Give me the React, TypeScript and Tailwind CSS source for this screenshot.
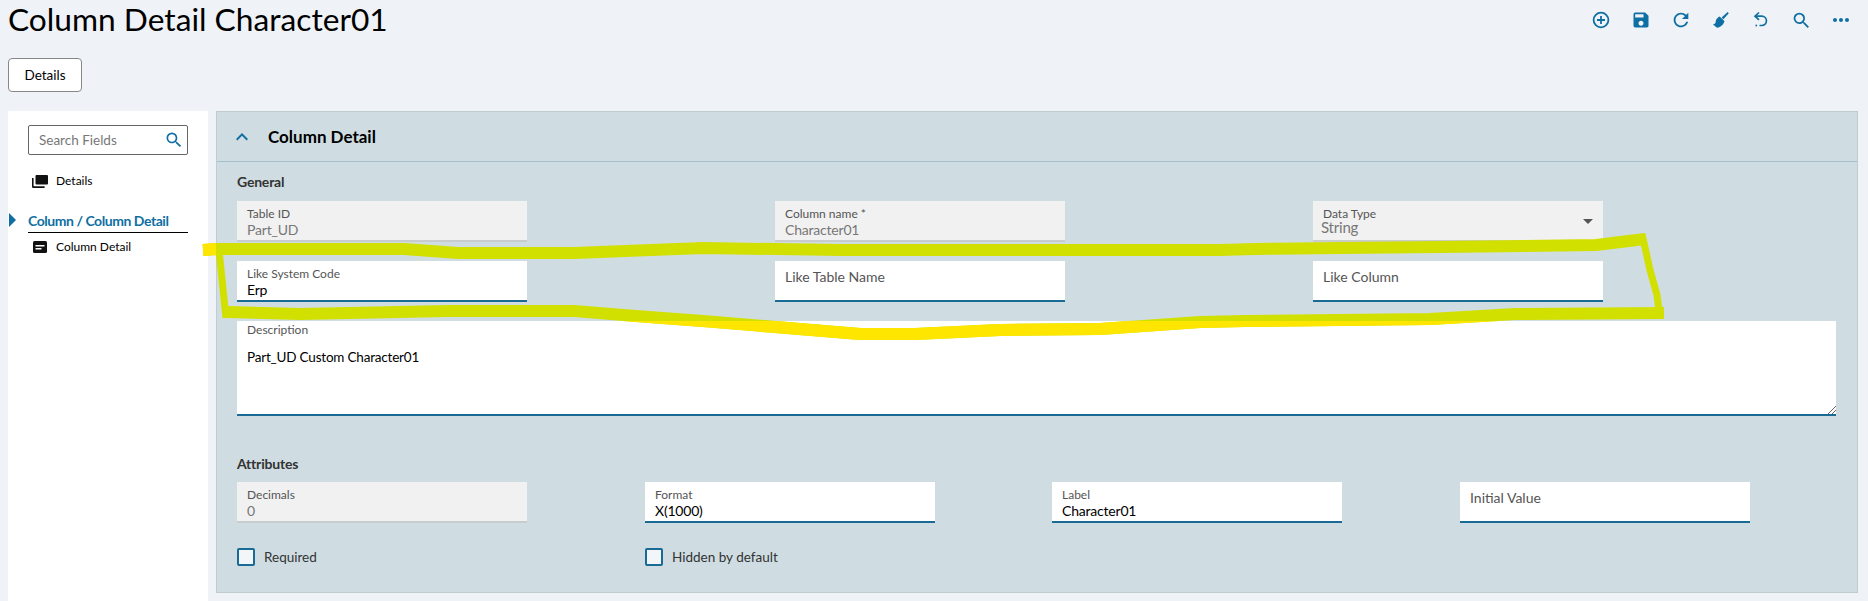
import { ReactNode } from "react";
import { MdSave, MdRefresh, MdSearch, MdMoreHoriz, MdKeyboardArrowUp, MdArrowDropDown } from "react-icons/md";

const font = { fontFamily: '"Lato", "Noto Sans", sans-serif' };

function AddIcon() {
  return (
    <svg width="18" height="18" viewBox="0 0 18 18" fill="none" stroke="#0f6fa3" strokeWidth="1.8">
      <circle cx="9" cy="9" r="7.4" />
      <path d="M9 5v8M5 9h8" />
    </svg>
  );
}

function BroomIcon() {
  return (
    <svg width="18" height="18" viewBox="0 0 18 18" fill="#0f6fa3">
      <path d="M7.6 5.6 12.4 10C12 13.2 8.8 16.2 5 16.8L1 13.6C3 13 4 11.4 3.8 9.4 4.8 7.6 6.2 6.2 7.6 5.6z" />
      <path d="M9.6 6.6 15.6 1l1.2 1.2-5.4 6z" />
    </svg>
  );
}

function UndoIcon() {
  return (
    <svg width="18" height="18" viewBox="0 0 18 18" fill="none" stroke="#0f6fa3" strokeWidth="1.7">
      <path d="M7 1.5 3 5.2l4 3.6" />
      <path d="M3.4 5.2h6.4a4.6 4.6 0 0 1 0 9.3H7.5" />
      <path d="M3.5 14.5h1.6" />
    </svg>
  );
}

function DetailsIcon() {
  return (
    <svg width="16" height="13" viewBox="0 0 16 13" fill="#111">
      <rect x="3.5" y="0" width="12.5" height="9.5" rx="1" />
      <path d="M0 3h1.6v8.2h11V13H1.2A1.2 1.2 0 0 1 0 11.8z" />
    </svg>
  );
}

function ColumnDetailIcon() {
  return (
    <svg width="14" height="12" viewBox="0 0 14 12">
      <rect width="14" height="12" rx="1.5" fill="#111" />
      <path d="M2.5 4h9v1.5h-9zM2.5 7h6v1.5h-6z" fill="#fff" />
    </svg>
  );
}

function ToolButton({ children }: { children: ReactNode }) {
  return <span className="flex h-[18px] w-[18px] items-center justify-center">{children}</span>;
}

function Field({
  label,
  value,
  disabled,
  select,
}: {
  label: string;
  value?: string;
  disabled?: boolean;
  select?: boolean;
}) {
  return (
    <div
      className={`relative h-[41px] w-[290px] border-b-2 pl-[10px] ${
        disabled ? "bg-[#f1f1f1] border-[#c9cccd]" : "bg-white border-[#1a6a96]"
      }`}
    >
      {value ? (
        <>
          <div className="pt-[5px] text-[12px] leading-[15px] text-[#555]">{label}</div>
          {select ? (
            <div className="ml-[-2px] mt-[-2px] text-[15px] leading-[17px] tracking-[-0.2px] text-[#777]">{value}</div>
          ) : (
            <div className={`text-[14px] leading-[17px] tracking-[-0.2px] ${disabled ? "text-[#777]" : "text-black"}`}>
              {value}
            </div>
          )}
        </>
      ) : (
        <div className="pt-[6px] text-[14px] leading-[20px] text-[#555]">{label}</div>
      )}
      {select && (
        <MdArrowDropDown className="absolute right-[3px] top-[8px] text-[#555]" size={24} />
      )}
    </div>
  );
}

function Checkbox({ label }: { label: string }) {
  return (
    <label className="flex items-center gap-[9px]">
      <span className="h-[18px] w-[18px] rounded-[2px] border-2 border-[#1a6a96] bg-[#f3f6f8]" />
      <span className="text-[13.5px] text-[#333]">{label}</span>
    </label>
  );
}

// hand drawn highlighter strokes, same shapes painted green and then yellow where it runs over white
function Strokes({ color }: { color: string }) {
  return (
    <g stroke={color}>
      <path
        strokeWidth="12"
        d="M203 250 L217 249 L404 249 L458 253 L574 253 L703 248 L840 250 L1220 250 L1255 249 L1439 247 L1596 245 L1645 239"
      />
      <path
        strokeWidth="12"
        d="M1664 313 L1515 314 L1430 319 L1245 321 L1200 322 L1100 329 L1000 330 L915 334 L860 334 L703 321 L636 316 L574 311 L449 311 L300 314 L228 312"
      />
      <path strokeWidth="7" d="M1642 234 L1650 270 L1657 295 L1660 318" />
      <path strokeWidth="7" d="M219 250 L226 318" />
    </g>
  );
}

export default function App() {
  return (
    <div className="relative h-[601px] w-[1868px] overflow-hidden bg-[#eff3f7]" style={font}>
      {/* Page header */}
      <div className="flex h-[58px] items-start justify-between pl-2 pr-[18px]">
        <h1 className="text-[31.7px] leading-[38px] text-black">Column Detail Character01</h1>
        <div className="flex h-10 items-center gap-[22px] text-[#0f6fa3]">
          <ToolButton><AddIcon /></ToolButton>
          <ToolButton><MdSave size={20} className="shrink-0" /></ToolButton>
          <ToolButton><MdRefresh size={22} className="shrink-0" /></ToolButton>
          <ToolButton><BroomIcon /></ToolButton>
          <ToolButton><UndoIcon /></ToolButton>
          <ToolButton><MdSearch size={21} className="shrink-0" /></ToolButton>
          <ToolButton><MdMoreHoriz size={24} className="shrink-0" /></ToolButton>
        </div>
      </div>

      <div className="pl-2">
        <button className="h-[34px] w-[74px] rounded-[4px] border border-[#888] bg-white text-[13.5px] text-black">
          Details
        </button>
      </div>

      <div className="mt-[19px] flex gap-2 pl-2 pr-[10px]">
        {/* Sidebar */}
        <aside className="h-[490px] w-[200px] bg-white px-5 pt-[14px]">
          <div className="flex h-[30px] w-[160px] items-center justify-between rounded-[2px] border border-[#666] pl-[10px] pr-[3px] text-[13.5px] text-[#777]">
            Search Fields
            <MdSearch size={20} className="text-[#0f6fa3]" />
          </div>
          <div className="mt-[17px] flex items-center gap-2 pl-1 text-[12px] text-black">
            <DetailsIcon />
            Details
          </div>
          <div className="relative mt-[20px] border-b border-black pb-[1px] text-[14px] font-bold tracking-[-0.45px] text-[#0f6fa3]">
            <span className="absolute left-[-19px] top-[3px] h-0 w-0 border-y-[7px] border-l-[7px] border-y-transparent border-l-[#0f6fa3]" />
            Column / Column Detail
          </div>
          <div className="mt-[5px] flex items-center gap-[9px] pl-[5px] text-[12px] text-black">
            <ColumnDetailIcon />
            Column Detail
          </div>
        </aside>

        {/* Main panel */}
        <main className="h-[482px] flex-1 border border-[#bfcdd2] bg-[#cfdde2]">
          <div className="flex h-[50px] items-center border-b border-[#a5bfcb] pl-[13px]">
            <MdKeyboardArrowUp size={24} className="text-[#0f6fa3]" />
            <span className="ml-[14px] text-[17px] font-bold text-black">Column Detail</span>
          </div>
          <div className="pl-5 pr-[21px]">
            <h2 className="mt-[12px] text-[14px] font-bold leading-[16px] tracking-[-0.2px] text-[#333]">General</h2>
            <div className="mt-[11px] grid grid-cols-[538px_538px_290px] gap-y-[19px]">
              <Field label="Table ID" value="Part_UD" disabled />
              <Field label="Column name *" value="Character01" disabled />
              <Field label="Data Type" value="String" disabled select />
              <Field label="Like System Code" value="Erp" />
              <Field label="Like Table Name" />
              <Field label="Like Column" />
            </div>
            <div className="relative mt-[19px] h-[95px] border-b-2 border-[#1a6a96] bg-white pl-[10px] pt-[1px]">
              <div className="text-[12px] leading-[15px] text-[#555]">Description</div>
              <div className="mt-[12px] text-[13.5px] leading-[17px] tracking-[-0.2px] text-black">Part_UD Custom Character01</div>
              <svg className="absolute bottom-0 right-0" width="9" height="9" viewBox="0 0 9 9" stroke="#666">
                <path d="M1 9 9 1M5 9l4-4" />
              </svg>
            </div>
            <h2 className="mt-[40px] text-[14px] font-bold leading-[16px] tracking-[-0.2px] text-[#333]">Attributes</h2>
            <div className="mt-[10px] grid grid-cols-[408px_407px_408px_290px]">
              <Field label="Decimals" value="0" disabled />
              <Field label="Format" value="X(1000)" />
              <Field label="Label" value="Character01" />
              <Field label="Initial Value" />
            </div>
            <div className="mt-[24px] grid grid-cols-[408px_290px]">
              <Checkbox label="Required" />
              <Checkbox label="Hidden by default" />
            </div>
          </div>
        </main>
      </div>

      {/* Highlighter annotation drawn over the page */}
      <svg className="pointer-events-none absolute left-0 top-0" width="1868" height="601" fill="none" strokeLinejoin="round">
        <defs>
          <clipPath id="over-white">
            <rect x="190" y="230" width="26" height="40" />
            <rect x="237" y="321" width="1600" height="30" />
          </clipPath>
        </defs>
        <Strokes color="#d2e000" />
        <g clipPath="url(#over-white)">
          <Strokes color="#ffe600" />
        </g>
      </svg>
    </div>
  );
}
